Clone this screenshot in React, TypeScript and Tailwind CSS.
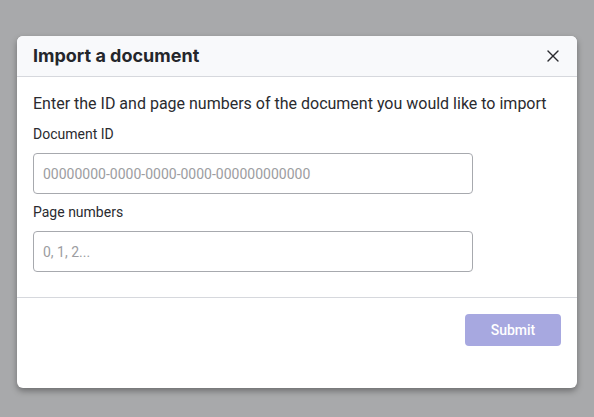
import { X } from "lucide-react";

export default function App() {
  return (
    <div className="flex min-h-[417px] w-full justify-center bg-[#a8a9ab] pt-[36px] font-['Roboto',sans-serif]">
      <div className="flex h-[352px] w-[560px] flex-col overflow-hidden rounded-md bg-white shadow-[0_3px_6px_rgba(0,0,0,0.35)]">
        <div className="flex h-[41px] shrink-0 items-center justify-between border-b border-[#d6d8dd] bg-[#f8f9fb] pl-4 pr-[14px]">
          <h2 className="font-['Inter',sans-serif] text-lg font-bold text-[#24262b]">Import a document</h2>
          <button className="text-[#2a2b2f]">
            <X className="h-5 w-5" strokeWidth={1.6} />
          </button>
        </div>
        <div className="flex flex-col px-4 pt-[15px]">
          <p className="text-base leading-6 text-[#2a2b2f]">
            Enter the ID and page numbers of the document you would like to import
          </p>
          <label className="mt-[8px] text-sm leading-5 text-[#2a2b2f]">Document ID</label>
          <input
            className="mt-[9px] h-[41px] w-[440px] rounded border border-[#a7a9ae] px-[9px] text-sm text-[#2a2b2f] outline-none placeholder:text-[#9c9da1]"
            placeholder="00000000-0000-0000-0000-000000000000"
          />
          <label className="mt-2 text-sm leading-5 text-[#2a2b2f]">Page numbers</label>
          <input
            className="mt-[9px] h-[41px] w-[440px] rounded border border-[#a7a9ae] px-[9px] text-sm text-[#2a2b2f] outline-none placeholder:text-[#9c9da1]"
            placeholder="0, 1, 2..."
          />
        </div>
        <div className="mt-[25px] border-t border-[#d6d8dd]" />
        <div className="flex justify-end px-4 pt-4">
          <button className="h-8 w-24 rounded bg-[#a7a8e0] text-sm font-medium text-white">Submit</button>
        </div>
      </div>
    </div>
  );
}
